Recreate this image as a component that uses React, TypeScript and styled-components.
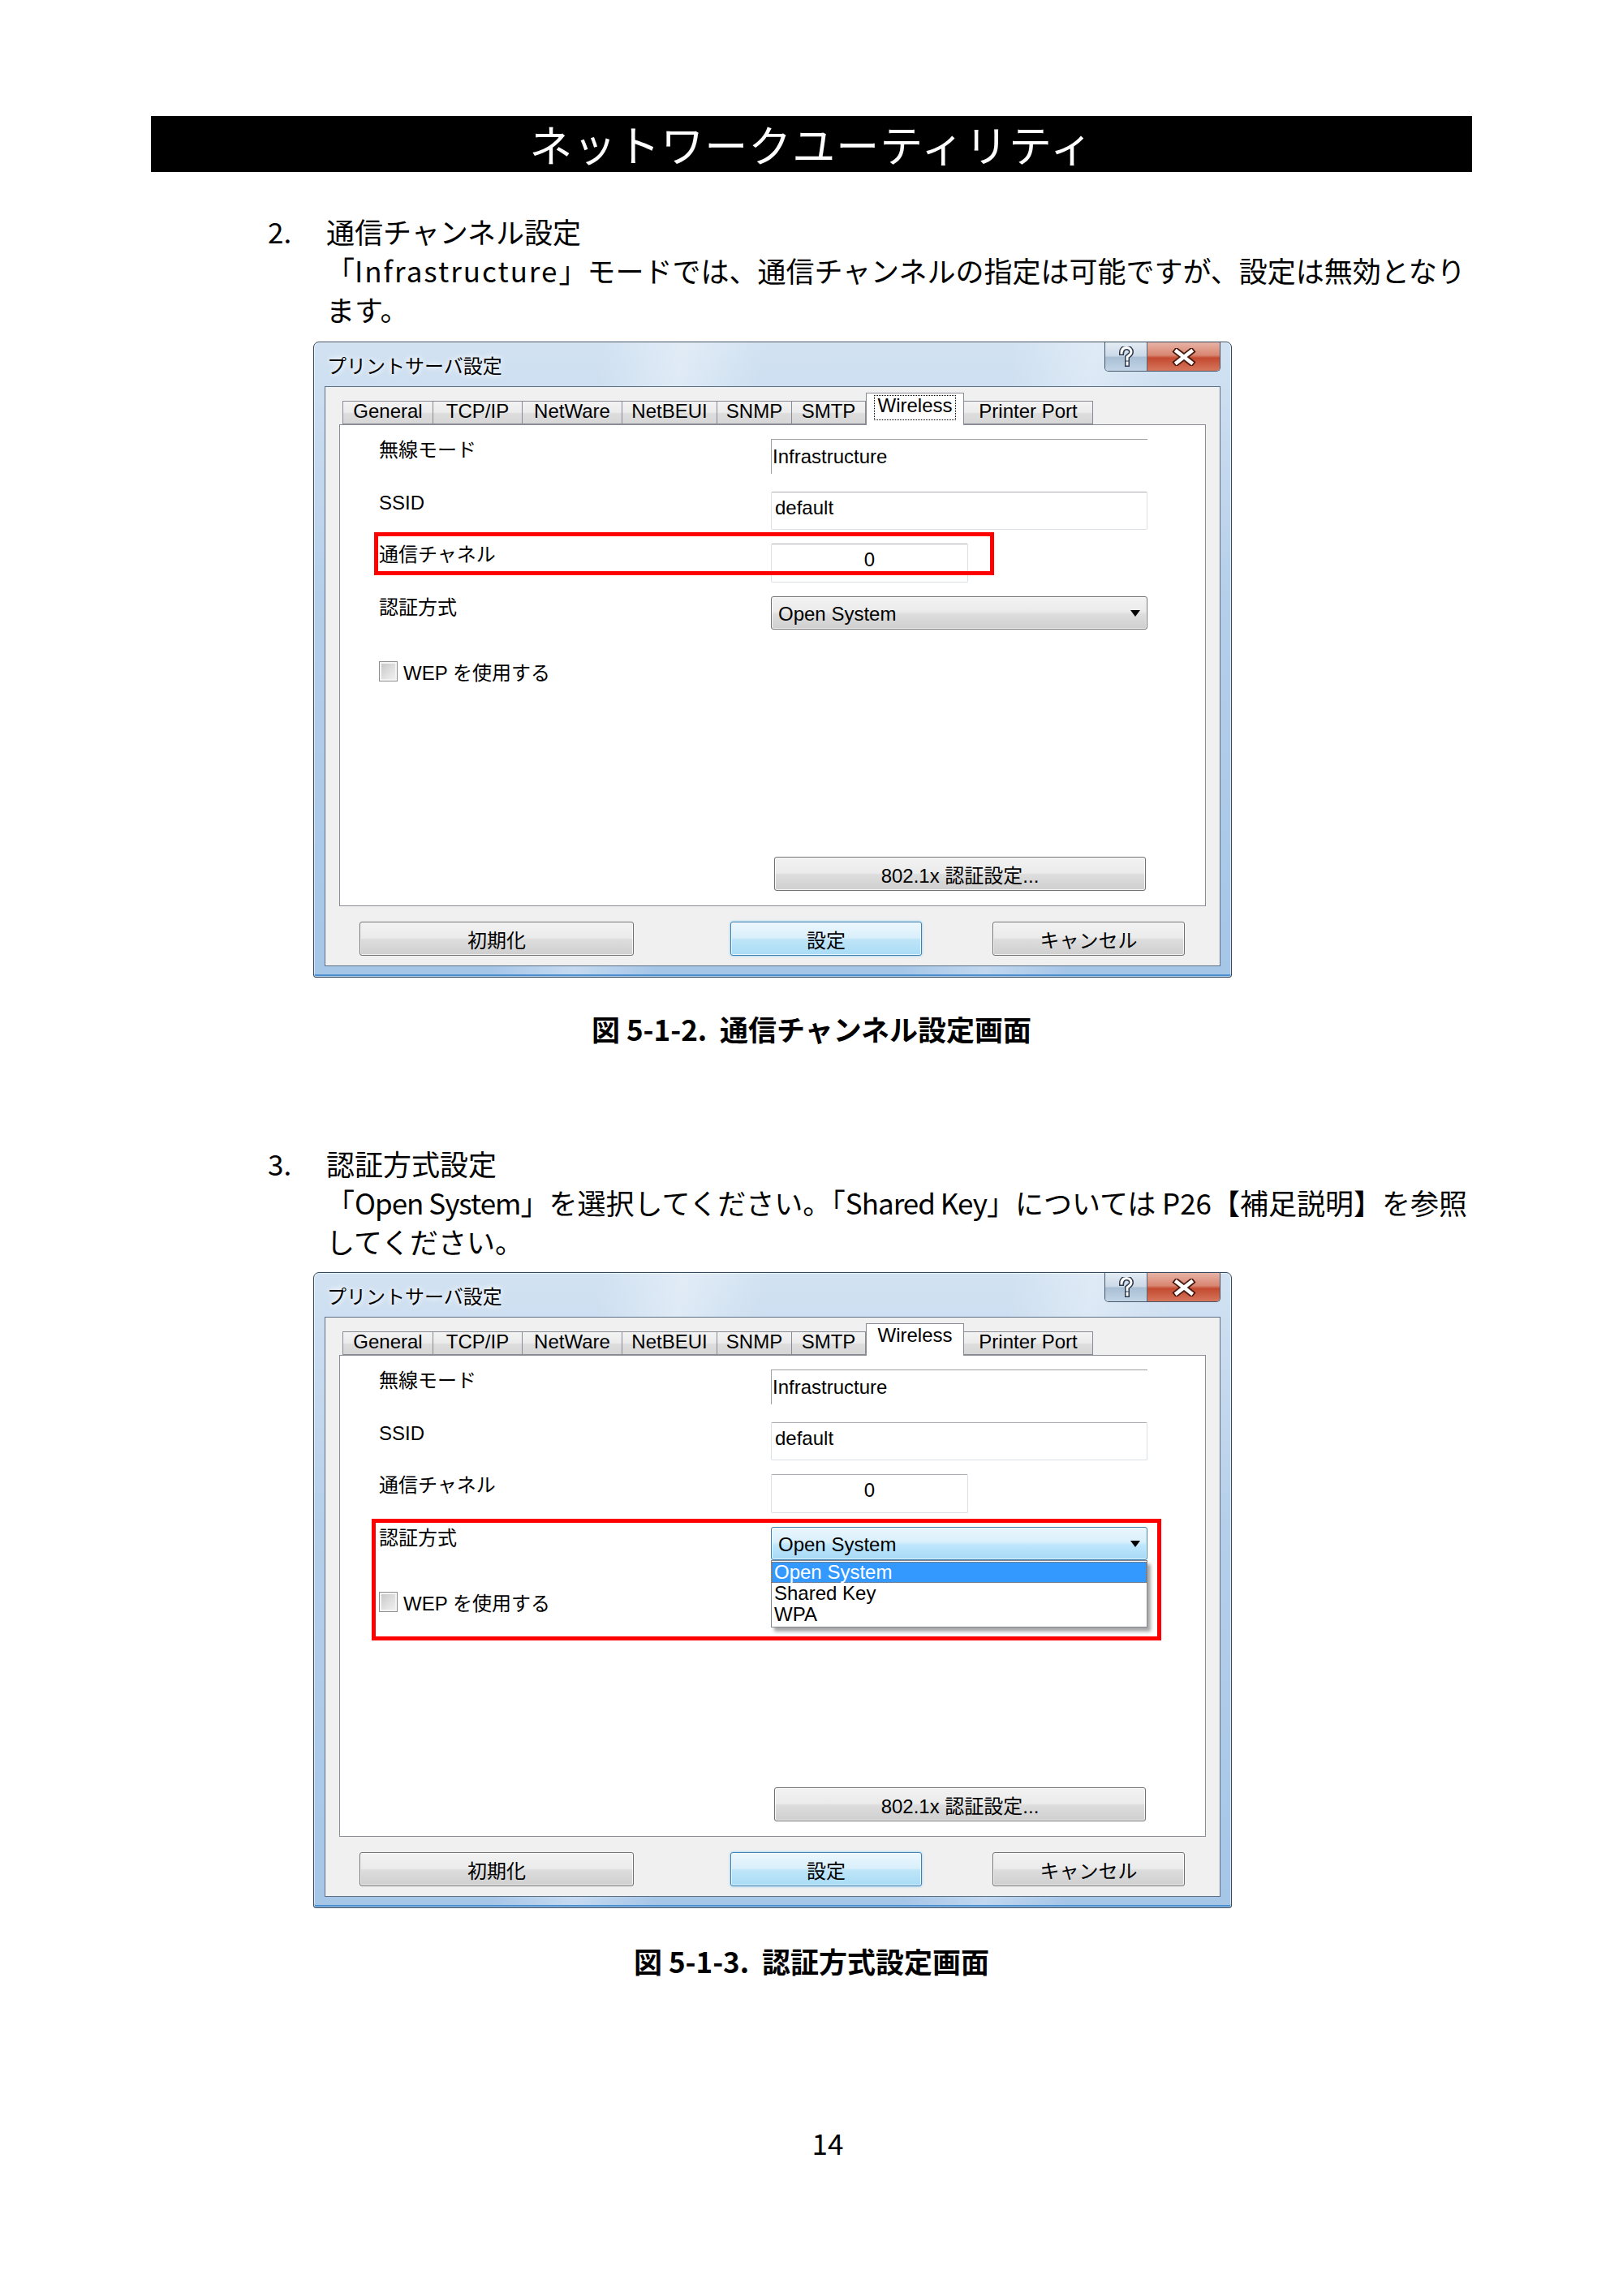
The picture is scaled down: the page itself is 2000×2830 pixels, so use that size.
import styled, { createGlobalStyle } from "styled-components";

const GlobalStyle = createGlobalStyle`
  body {
    margin: 0;
    background: #fff;
  }
`;

const Page = styled.div`
  width: 2000px;
  min-height: 2830px;
  box-sizing: border-box;
  padding-top: 143px;
  font-family: "Noto Sans CJK JP", sans-serif;
  color: #000;
`;

const Banner = styled.h1`
  margin: 0 186px;
  height: 69px;
  background: #000;
  color: #fff;
  font-size: 53px;
  font-weight: 400;
  line-height: 69px;
  text-align: center;
  letter-spacing: 1px;
`;

const Section = styled.section<{ $mt: number }>`
  margin: ${(p) => p.$mt}px 0 0 330px;
  width: 1490px;
  font-size: 35px;
  line-height: 48px;
`;

const Heading = styled.div`
  display: flex;
`;

const Num = styled.span`
  width: 72px;
  flex: none;
`;

const Para = styled.p`
  margin: 0 0 0 72px;
  white-space: nowrap;
`;

// half-width runs inside the Japanese text
const Latin = styled.span<{ $ls?: number }>`
  letter-spacing: ${(p) => p.$ls ?? 0}px;
`;

const Caption = styled.div<{ $mt: number }>`
  margin-top: ${(p) => p.$mt}px;
  text-align: center;
  font-size: 35px;
  line-height: 48px;
  font-weight: 700;
`;

const PageNo = styled.div`
  margin-top: 176px;
  padding-left: 40px;
  text-align: center;
  font-size: 35px;
  line-height: 48px;
`;

/* ---------- dialog ---------- */

const Window = styled.div<{ $mt: number }>`
  position: relative;
  width: 1132px;
  box-sizing: border-box;
  margin: ${(p) => p.$mt}px 0 0 386px;
  border: 1px solid #34495e;
  border-radius: 7px 7px 3px 3px;
  padding: 0 13px 13px;
  font-family: "Liberation Sans", "Noto Sans CJK JP", sans-serif;
  font-size: 24px;
  color: #000;
  background:
    linear-gradient(
      100deg,
      rgba(255, 255, 255, 0) 28%,
      rgba(255, 255, 255, 0.35) 36%,
      rgba(255, 255, 255, 0) 44%,
      rgba(255, 255, 255, 0) 68%,
      rgba(255, 255, 255, 0.3) 76%,
      rgba(255, 255, 255, 0) 84%
    ),
    linear-gradient(180deg, #d2e2f2 0%, #b5cfea 40%, #a6c6e8 100%);
  box-shadow: inset 0 0 0 1px rgba(255, 255, 255, 0.55),
    inset 0 -3px 0 #4e8fcf;
`;

const TitleBar = styled.div`
  height: 54px;
  display: flex;
  align-items: center;
  justify-content: space-between;
`;

const TitleText = styled.span`
  padding-left: 3px;
  text-shadow: 0 0 6px #fff, 0 0 10px #fff;
`;

const CaptionButtons = styled.div`
  align-self: flex-start;
  display: flex;
  height: 35px;
  border: 1px solid #44576b;
  border-top: none;
  border-radius: 0 0 5px 5px;
  overflow: hidden;
`;

const HelpButton = styled.div`
  width: 51px;
  display: flex;
  align-items: center;
  justify-content: center;
  background: linear-gradient(180deg, #e4ecf4 0%, #cbd9e7 48%, #a9bfd4 52%, #c2d4e6 100%);
  border-right: 1px solid #54677b;
`;

const CloseButton = styled.div`
  width: 89px;
  display: flex;
  align-items: center;
  justify-content: center;
  background: linear-gradient(180deg, #e8b3a6 0%, #d88671 45%, #c34a30 55%, #d6765c 100%);
`;

const Client = styled.div`
  height: 715px;
  box-sizing: border-box;
  border: 1px solid #5d7186;
  background: #f0f0f0;
  padding: 16px 17px 12px;
  display: flex;
  flex-direction: column;
`;

const TabStrip = styled.div`
  display: flex;
  align-items: flex-end;
  height: 30px;
  padding-left: 4px;
  position: relative;
  z-index: 1;
`;

const Tab = styled.div<{ $w: number; $active?: boolean }>`
  width: ${(p) => p.$w}px;
  box-sizing: border-box;
  height: ${(p) => (p.$active ? 40 : 29)}px;
  margin-bottom: ${(p) => (p.$active ? -1 : 0)}px;
  display: flex;
  justify-content: center;
  padding-top: ${(p) => (p.$active ? 2 : 0)}px;
  border: 1px solid #898c95;
  border-bottom: ${(p) => (p.$active ? "none" : "1px solid #898c95")};
  border-left-width: ${(p) => (p.$active ? 1 : 0)}px;
  background: ${(p) =>
    p.$active ? "#fff" : "linear-gradient(180deg, #f3f3f3 0%, #ebebeb 50%, #dedede 51%, #d6d6d6 100%)"};
  white-space: nowrap;
  line-height: 24px;

  &:first-child {
    border-left-width: 1px;
  }
`;

const FocusRing = styled.span`
  border: 1px dotted #000;
  padding: 0 3px 3px;
  height: 26px;
`;

const Panel = styled.div`
  flex: 1;
  background: #fff;
  border: 1px solid #898c95;
  padding: 17px 0 18px 48px;
  display: flex;
  flex-direction: column;
`;

const Row = styled.div<{ $h: number; $mt: number }>`
  display: grid;
  grid-template-columns: 483px 464px;
  height: ${(p) => p.$h}px;
  margin-top: ${(p) => p.$mt}px;
`;

const Label = styled.span`
  line-height: 28px;
`;

const StaticField = styled.div`
  border-top: 1px solid #a0a0a0;
  border-left: 1px solid #a0a0a0;
  padding: 7px 0 0 1px;
  line-height: 28px;
`;

const TextField = styled.div<{ $w?: number; $center?: boolean }>`
  width: ${(p) => (p.$w ? `${p.$w}px` : "auto")};
  box-sizing: border-box;
  border: 1px solid #dbdfe6;
  border-top-color: #abadb3;
  border-radius: 2px;
  padding: 5px 4px 0;
  line-height: 28px;
  text-align: ${(p) => (p.$center ? "center" : "left")};
`;

const ComboWrap = styled.div`
  position: relative;
`;

const Combo = styled.div<{ $hot?: boolean }>`
  height: 100%;
  box-sizing: border-box;
  display: flex;
  align-items: center;
  justify-content: space-between;
  padding: 2px 8px 0 8px;
  border: 1px solid ${(p) => (p.$hot ? "#3c7fb1" : "#707070")};
  border-radius: 3px;
  background: ${(p) =>
    p.$hot
      ? "linear-gradient(180deg, #eaf6fd 0%, #d9f0fc 45%, #bee6fd 55%, #a7d9f5 100%)"
      : "linear-gradient(180deg, #f2f2f2 0%, #ebebeb 45%, #dddddd 55%, #cfcfcf 100%)"};
  box-shadow: inset 0 0 0 1px rgba(255, 255, 255, 0.7);
`;

const Arrow = styled.span`
  width: 0;
  height: 0;
  border-left: 6px solid transparent;
  border-right: 6px solid transparent;
  border-top: 8px solid #000;
  margin-top: -2px;
`;

const DropList = styled.ul`
  position: absolute;
  top: 100%;
  left: 0;
  right: 0;
  margin: 0;
  padding: 1px 0 2px;
  list-style: none;
  background: #fff;
  border: 1px solid #828790;
  box-shadow: 4px 5px 4px rgba(0, 0, 0, 0.35);
  z-index: 2;
`;

const DropItem = styled.li<{ $sel?: boolean }>`
  height: 26px;
  padding-left: 2px;
  box-sizing: border-box;
  background: ${(p) => (p.$sel ? "#3399ff" : "transparent")};
  color: ${(p) => (p.$sel ? "#fff" : "#000")};
  border: 1px dotted ${(p) => (p.$sel ? "#a86a35" : "transparent")};
  line-height: 24px;
`;

const CheckRow = styled.label`
  display: flex;
  align-items: center;
  gap: 7px;
  margin-top: 38px;
  height: 26px;
`;

const CheckBox = styled.span`
  width: 23px;
  height: 25px;
  box-sizing: border-box;
  border: 1px solid #8e8f8f;
  background: linear-gradient(135deg, #c4c4c4 0%, #e2e2e2 60%, #f2f2f2 100%);
  box-shadow: inset 0 0 0 2px #f4f4f4;
`;

const Button = styled.div<{ $w: number; $ml?: number; $default?: boolean }>`
  width: ${(p) => p.$w}px;
  height: 42px;
  margin-left: ${(p) => p.$ml ?? 0}px;
  box-sizing: border-box;
  display: flex;
  align-items: center;
  justify-content: center;
  border: 1px solid ${(p) => (p.$default ? "#3c7fb1" : "#707070")};
  border-radius: 3px;
  background: ${(p) =>
    p.$default
      ? "linear-gradient(180deg, #ecf7fd 0%, #d9effb 48%, #bfe5f8 52%, #a9dcf6 100%)"
      : "linear-gradient(180deg, #f2f2f2 0%, #ebebeb 48%, #dddddd 52%, #cfcfcf 100%)"};
  box-shadow: inset 0 0 0 1px rgba(255, 255, 255, 0.75)
    ${(p) => (p.$default ? ", 0 0 3px #6ec3ef" : "")};
`;

const WideButton = styled(Button)`
  margin-top: auto;
  margin-left: 487px;
`;

const ButtonRow = styled.div`
  display: flex;
  margin-top: 19px;
  padding-left: 25px;
`;

const Marker = styled.div<{ $l: number; $t: number; $w: number; $h: number }>`
  position: absolute;
  left: ${(p) => p.$l}px;
  top: ${(p) => p.$t}px;
  width: ${(p) => p.$w}px;
  height: ${(p) => p.$h}px;
  box-sizing: border-box;
  border: 5px solid #ff0000;
  pointer-events: none;
  z-index: 3;
`;

const TABS = [
  { label: "General", w: 112 },
  { label: "TCP/IP", w: 110 },
  { label: "NetWare", w: 123 },
  { label: "NetBEUI", w: 117 },
  { label: "SNMP", w: 92 },
  { label: "SMTP", w: 91 },
  { label: "Wireless", w: 121 },
  { label: "Printer Port", w: 159 },
];

const AUTH_MODES = ["Open System", "Shared Key", "WPA"];

// outlined white question mark of the caption help button
function HelpGlyph() {
  const d = "M6 8 C6 3 9 1.5 12 1.5 C15.5 1.5 18 3.5 18 7 C18 10 15 11 13 13 L13 16 M13 20 L13 22";
  return (
    <svg width="24" height="26" viewBox="0 0 24 26">
      <path d={d} fill="none" stroke="#2e3b4c" strokeWidth="6" strokeLinecap="square" />
      <path d={d} fill="none" stroke="#fff" strokeWidth="3" strokeLinecap="square" />
    </svg>
  );
}

function CloseGlyph() {
  return (
    <svg width="30" height="22" viewBox="0 0 30 22">
      <path d="M6 4 L24 18 M24 4 L6 18" stroke="#4a1a10" strokeWidth="8" strokeLinecap="square" />
      <path d="M6 4 L24 18 M24 4 L6 18" stroke="#fff" strokeWidth="4.5" strokeLinecap="square" />
    </svg>
  );
}

function PrintServerDialog({ mode, mt }: { mode: "channel" | "auth"; mt: number }) {
  const listOpen = mode === "auth";
  return (
    <Window $mt={mt}>
      <TitleBar>
        <TitleText>プリントサーバ設定</TitleText>
        <CaptionButtons>
          <HelpButton>
            <HelpGlyph />
          </HelpButton>
          <CloseButton>
            <CloseGlyph />
          </CloseButton>
        </CaptionButtons>
      </TitleBar>
      <Client>
        <TabStrip>
          {TABS.map((t) => {
            const active = t.label === "Wireless";
            return (
              <Tab key={t.label} $w={t.w} $active={active}>
                {active && !listOpen ? <FocusRing>{t.label}</FocusRing> : t.label}
              </Tab>
            );
          })}
        </TabStrip>
        <Panel>
          <Row $h={43} $mt={0}>
            <Label>無線モード</Label>
            <StaticField>Infrastructure</StaticField>
          </Row>
          <Row $h={47} $mt={22}>
            <Label>SSID</Label>
            <TextField>default</TextField>
          </Row>
          <Row $h={48} $mt={17}>
            <Label>通信チャネル</Label>
            <TextField $w={243} $center>
              0
            </TextField>
          </Row>
          <Row $h={41} $mt={17}>
            <Label>認証方式</Label>
            <ComboWrap>
              <Combo $hot={listOpen}>
                <span>Open System</span>
                <Arrow />
              </Combo>
              {listOpen && (
                <DropList>
                  {AUTH_MODES.map((m, i) => (
                    <DropItem key={m} $sel={i === 0}>
                      {m}
                    </DropItem>
                  ))}
                </DropList>
              )}
            </ComboWrap>
          </Row>
          <CheckRow>
            <CheckBox />
            <span>WEP を使用する</span>
          </CheckRow>
          <WideButton $w={458}>802.1x 認証設定...</WideButton>
        </Panel>
        <ButtonRow>
          <Button $w={338}>初期化</Button>
          <Button $w={236} $ml={119} $default>
            設定
          </Button>
          <Button $w={237} $ml={87}>
            キャンセル
          </Button>
        </ButtonRow>
      </Client>
      {listOpen ? (
        <Marker $l={71} $t={303} $w={973} $h={150} />
      ) : (
        <Marker $l={74} $t={234} $w={764} $h={53} />
      )}
    </Window>
  );
}

export default function App() {
  return (
    <>
      <GlobalStyle />
      <Page>
        <Banner>ネットワークユーティリティ</Banner>

        <Section $mt={49}>
          <Heading>
            <Num>2.</Num>
            <span>通信チャンネル設定</span>
          </Heading>
          <Para>
            「<Latin $ls={2}>Infrastructure</Latin>」モードでは、通信チャンネルの指定は可能ですが、設定は無効となり
            <br />
            ます。
          </Para>
        </Section>
        <PrintServerDialog mode="channel" mt={16} />
        <Caption $mt={39}>図 5-1-2.&nbsp;&nbsp;通信チャンネル設定画面</Caption>

        <Section $mt={118}>
          <Heading>
            <Num>3.</Num>
            <span>認証方式設定</span>
          </Heading>
          <Para>
            「<Latin $ls={-1}>Open System</Latin>」を選択してください。「<Latin $ls={-1}>Shared Key</Latin>」については P26【補足説明】を参照
            <br />
            してください。
          </Para>
        </Section>
        <PrintServerDialog mode="auth" mt={14} />
        <Caption $mt={41}>図 5-1-3.&nbsp;&nbsp;認証方式設定画面</Caption>

        <PageNo>14</PageNo>
      </Page>
    </>
  );
}
